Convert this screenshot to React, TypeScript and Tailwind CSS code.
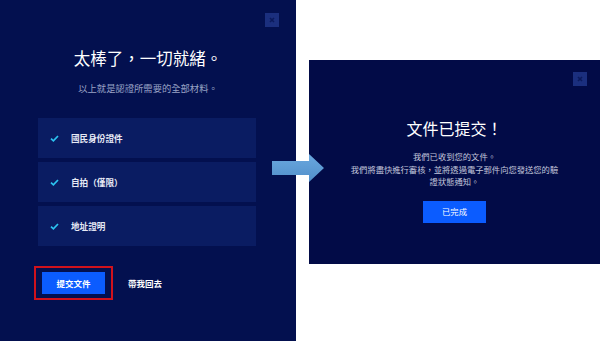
const font = { fontFamily: '"Noto Sans CJK TC", "Noto Sans", sans-serif' };

const items = ["國民身份證件", "自拍（僅限）", "地址證明"];

function CloseButton({ className }: { className: string }) {
  return (
    <div
      className={`absolute flex h-[14px] w-[14px] items-center justify-center bg-[#1b2f7e] ${className}`}
    >
      <svg width="6" height="6" viewBox="0 0 6 6">
        <path d="M1 1 L5 5 M5 1 L1 5" stroke="#0b1a5c" strokeWidth="1.6" />
      </svg>
    </div>
  );
}

function Check() {
  return (
    <svg width="9" height="7" viewBox="0 0 9 7" className="shrink-0">
      <path
        d="M1 3.6 L3.4 5.8 L8 1"
        fill="none"
        stroke="#2cc3f0"
        strokeWidth="1.7"
      />
    </svg>
  );
}

export default function App() {
  return (
    <div
      lang="zh-TW"
      className="relative flex h-[341px] w-[600px] overflow-hidden bg-white"
      style={font}
    >
      {/* Left dialog */}
      <section className="relative flex h-[341px] w-[296px] shrink-0 flex-col bg-[#03104f]">
        <CloseButton className="right-[17px] top-[13px]" />
        <h1 className="pt-[47px] text-center text-[16.5px] leading-[22px] text-white">
          太棒了，一切就緒。
        </h1>
        <p className="mt-[12px] text-center text-[9.3px] leading-[14px] text-[#9aa3c6]">
          以上就是認證所需要的全部材料。
        </p>
        <ul className="ml-[38px] mt-[23px] flex w-[218px] flex-col gap-[4px]">
          {items.map((item) => (
            <li
              key={item}
              className="flex h-[40px] items-center gap-[12px] bg-[#0a1c62] pl-[12px]"
            >
              <Check />
              <span className="text-[8.6px] font-bold text-[#e6e9f5]">
                {item}
              </span>
            </li>
          ))}
        </ul>
        <div className="ml-[34px] mt-[20px] flex items-center gap-[15px]">
          <div className="border-2 border-[#d0121c] px-[6px] py-[4px]">
            <button className="flex h-[22px] w-[63px] items-center justify-center bg-[#0b5cff] text-[8.5px] font-bold text-white">
              提交文件
            </button>
          </div>
          <span className="text-[8.5px] font-bold text-white">帶我回去</span>
        </div>
      </section>

      {/* Right dialog */}
      <section className="relative ml-[13px] mt-[60px] flex h-[204px] w-[291px] shrink-0 flex-col items-center bg-[#020b47]">
        <CloseButton className="right-[13px] top-[12px]" />
        <h2 className="pt-[57px] text-[16px] leading-[22px] text-white">
          文件已提交！
        </h2>
        <p className="mt-[11px] text-center text-[8.3px] leading-[12.5px] text-[#c3c7dc]">
          我們已收到您的文件。
          <br />
          我們將盡快進行審核，並將透過電子郵件向您發送您的驗
          <br />
          證狀態通知。
        </p>
        <button className="mt-[13px] flex h-[22px] w-[63px] items-center justify-center bg-[#0b5cff] text-[8.3px] text-white">
          已完成
        </button>
      </section>

      {/* Arrow overlay */}
      <svg
        className="absolute left-[272px] top-[153px]"
        width="54"
        height="30"
        viewBox="0 0 54 30"
      >
        <defs>
          <linearGradient id="arr" x1="0" y1="0" x2="0" y2="1">
            <stop offset="0" stopColor="#6aa8df" />
            <stop offset="1" stopColor="#518fca" />
          </linearGradient>
        </defs>
        <polygon
          points="0,8 37,8 37,1 52,15 37,29 37,22 0,22"
          fill="url(#arr)"
        />
      </svg>
    </div>
  );
}
